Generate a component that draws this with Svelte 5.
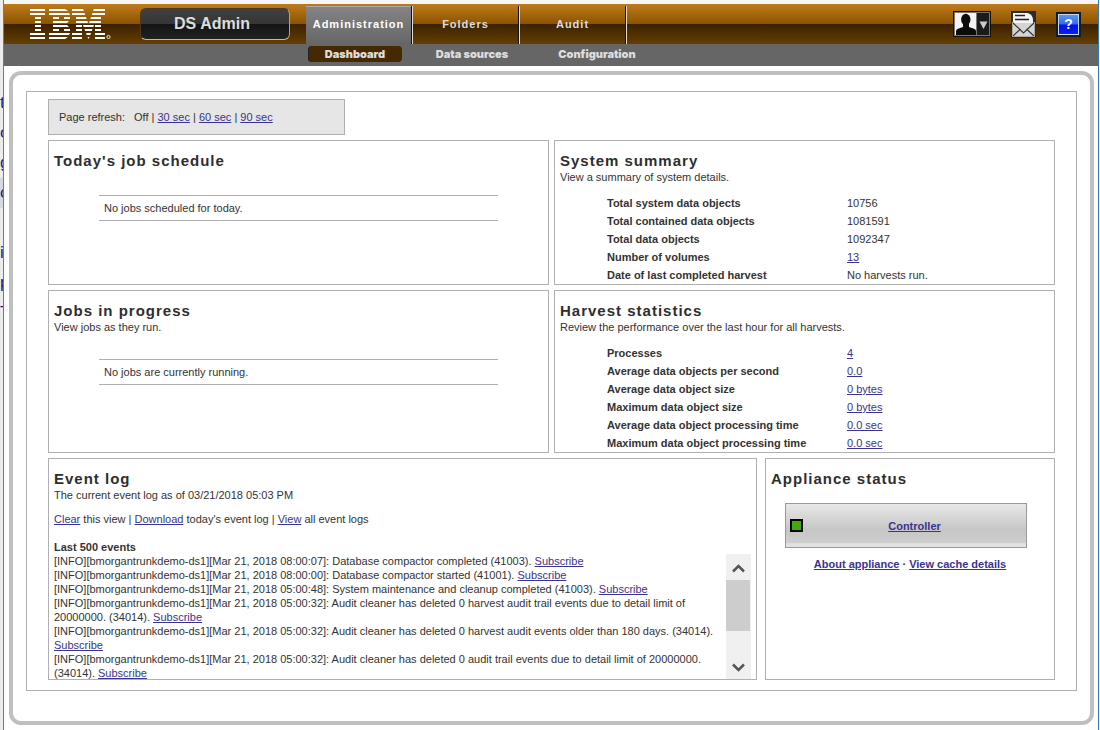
<script>
  let logBox;

  const edgeRows = ['t', 'o', 'g', 'c', '', 'i', 'p', 'T'];

  const tabs = [
    { label: 'Administration', active: true },
    { label: 'Folders', active: false },
    { label: 'Audit', active: false }
  ];

  const subTabs = [
    { label: 'Dashboard', active: true },
    { label: 'Data sources', active: false },
    { label: 'Configuration', active: false }
  ];

  const summary = [
    { label: 'Total system data objects', value: '10756' },
    { label: 'Total contained data objects', value: '1081591' },
    { label: 'Total data objects', value: '1092347' },
    { label: 'Number of volumes', value: '13', link: true },
    { label: 'Date of last completed harvest', value: 'No harvests run.' }
  ];

  const harvest = [
    { label: 'Processes', value: '4' },
    { label: 'Average data objects per second', value: '0.0' },
    { label: 'Average data object size', value: '0 bytes' },
    { label: 'Maximum data object size', value: '0 bytes' },
    { label: 'Average data object processing time', value: '0.0 sec' },
    { label: 'Maximum data object processing time', value: '0.0 sec' }
  ];

  const host = '[INFO][bmorgantrunkdemo-ds1]';
  const events = [
    { time: 'Mar 21, 2018 08:00:07', text: 'Database compactor completed (41003).' },
    { time: 'Mar 21, 2018 08:00:00', text: 'Database compactor started (41001).' },
    { time: 'Mar 21, 2018 05:00:48', text: 'System maintenance and cleanup completed (41003).' },
    { time: 'Mar 21, 2018 05:00:32', text: 'Audit cleaner has deleted 0 harvest audit trail events due to detail limit of 20000000. (34014).' },
    { time: 'Mar 21, 2018 05:00:32', text: 'Audit cleaner has deleted 0 harvest audit events older than 180 days. (34014).' },
    { time: 'Mar 21, 2018 05:00:32', text: 'Audit cleaner has deleted 0 audit trail events due to detail limit of 20000000. (34014).' }
  ];

  function scrollLog(amount) {
    logBox.scrollBy(0, amount);
  }
</script>

<div class="window">
  <div class="edge" aria-hidden="true">
    {#each edgeRows as ch}
      <span class:marked={ch === 'c'}>{ch}</span>
    {/each}
  </div>

  <div class="page">
    <header>
      <div class="bar">
        <svg class="logo" viewBox="0 0 82 30" role="img" aria-label="IBM">
          <g fill="#fff">
            <path d="M0 0h15v2H0zM0 4h15v2H0zM5 8h6v2H5zM5 12h6v2H5zM5 16h6v2H5zM5 20h6v2H5zM0 24h15v2H0zM0 28h15v2H0z" />
            <path d="M19 0h16l3 2H19zM19 4h20l1 2H19zM23 8h6v2h-6zM34 8h6v2h-6zM23 12h16l-2 2H23zM23 16h14l2 2H23zM23 20h6v2h-6zM34 20h6v2h-6zM19 24h21l-1 2H19zM19 28h19l-3 2H19z" />
            <path d="M42 0h11l1 2H42zM75 0H64l-1 2h12zM42 4h12.500l.7 2H42zM75 4H62.500l-.7 2H75zM46 8h10l.7 2H46zM71 8H61l-.7 2H71zM46 12h11.300l.7 2H46zM71 12H59.700l-.7 2H71zM46 16h6v2h-6zM53 16h11l-.7 2h-9.600zM65 16h6v2h-6zM46 20h6v2h-6zM54.500 20h8l-.7 2h-6.600zM65 20h6v2h-6zM42 24h10v2H42zM56 24h5l-.7 2h-3.600zM65 24h10v2H65zM42 28h10v2H42zM57.500 28h2l-1 2zM65 28h10v2H65z" />
          </g>
          <circle cx="78.500" cy="28" r="1.600" fill="none" stroke="#f3e6d0" stroke-width="1" />
        </svg>
        <button class="product" type="button">DS Admin</button>
        <nav class="tabs" aria-label="Main">
          {#each tabs as tab}
            <a href="#main" class:active={tab.active}>{tab.label}</a>
          {/each}
        </nav>
        <div class="tools">
          <button type="button" aria-label="User menu">
            <svg width="38" height="26" viewBox="0 0 38 26">
              <rect width="38" height="26" fill="#111" />
              <rect x="1.500" y="1.500" width="35" height="23" fill="#1b1b1b" stroke="#777" />
              <rect x="2" y="2" width="21" height="22" fill="#f4f4f4" />
              <ellipse cx="12.800" cy="8.500" rx="4.700" ry="5.800" fill="#0c0c0c" />
              <path d="M3 24v-4q0-1.500 2-2.200L10 16v-4h6v4l5 1.800q2 .7 2 2.200v4z" fill="#0c0c0c" />
              <path d="M23.500 2v22" stroke="#777" />
              <path d="M26.500 10.500h8L30.500 18z" fill="#ccc" />
            </svg>
          </button>
          <button type="button" aria-label="Messages">
            <svg width="25" height="27" viewBox="0 0 25 27">
              <rect width="25" height="27" fill="#2a2a2a" />
              <path d="M2 2h15q5 2 5 7v8H2z" fill="#f4f4f4" />
              <path d="M4 4.500h10M4 8.500h14" stroke="#222" stroke-width="1.500" />
              <path d="M1 11l4 1h15l4-1v15H1z" fill="#d4d4d4" />
              <path d="M1.500 11.500l11 10.500L23.500 11.500M1.500 25.500l8-7.500M23.500 25.500l-8-7.500" fill="none" stroke="#333" stroke-width="1.100" />
              <path d="M1.500 11v14.500h22V11" fill="none" stroke="#aaa" />
            </svg>
          </button>
          <button type="button" class="help" aria-label="Help">?</button>
        </div>
      </div>
      <nav class="sub" aria-label="Administration">
        {#each subTabs as tab}
          <a href="#main" class:active={tab.active}>{tab.label}</a>
        {/each}
      </nav>
    </header>

    <main id="main">
      <div class="sheet">
        <div class="refresh">
          <span>Page refresh:</span>
          <span>Off | <a href="#main">30 sec</a> | <a href="#main">60 sec</a> | <a href="#main">90 sec</a></span>
        </div>

        <div class="grid">
          <section class="panel">
            <h2>Today's job schedule</h2>
            <p class="empty">No jobs scheduled for today.</p>
          </section>

          <section class="panel">
            <h2>System summary</h2>
            <p>View a summary of system details.</p>
            <table>
              <tbody>
                {#each summary as row}
                  <tr>
                    <th scope="row">{row.label}</th>
                    <td>{#if row.link}<a href="#main">{row.value}</a>{:else}{row.value}{/if}</td>
                  </tr>
                {/each}
              </tbody>
            </table>
          </section>

          <section class="panel">
            <h2>Jobs in progress</h2>
            <p>View jobs as they run.</p>
            <p class="empty">No jobs are currently running.</p>
          </section>

          <section class="panel">
            <h2>Harvest statistics</h2>
            <p>Review the performance over the last hour for all harvests.</p>
            <table>
              <tbody>
                {#each harvest as row}
                  <tr>
                    <th scope="row">{row.label}</th>
                    <td><a href="#main">{row.value}</a></td>
                  </tr>
                {/each}
              </tbody>
            </table>
          </section>
        </div>

        <div class="lower">
          <section class="panel">
            <h2>Event log</h2>
            <p>The current event log as of 03/21/2018 05:03 PM</p>
            <p class="actions"><a href="#main">Clear</a> this view | <a href="#main">Download</a> today's event log | <a href="#main">View</a> all event logs</p>
            <h3>Last 500 events</h3>
            <div class="scroller">
              <div class="events" bind:this={logBox}>
                {#each events as e}
                  <div>{host}[{e.time}]: {e.text} <a href="#main">Subscribe</a></div>
                {/each}
              </div>
              <div class="track">
                <button type="button" aria-label="Scroll up" onclick={() => scrollLog(-14)}>
                  <svg width="13" height="9" viewBox="0 0 13 9"><path d="M1 7.500l5.500-5.500L12 7.500" fill="none" stroke="#555" stroke-width="2.500" /></svg>
                </button>
                <div class="thumb"></div>
                <button type="button" class="down" aria-label="Scroll down" onclick={() => scrollLog(14)}>
                  <svg width="13" height="9" viewBox="0 0 13 9"><path d="M1 1.500L6.500 7 12 1.500" fill="none" stroke="#555" stroke-width="2.500" /></svg>
                </button>
              </div>
            </div>
          </section>

          <section class="panel">
            <h2>Appliance status</h2>
            <div class="controller">
              <span class="lamp"></span>
              <a href="#main">Controller</a>
            </div>
            <p class="more"><a href="#main">About appliance</a> · <a href="#main">View cache details</a></p>
          </section>
        </div>
      </div>
    </main>
  </div>
</div>

<style>
  :global(body) {
    margin: 0;
    background: #fff;
  }

  .window {
    display: flex;
    min-height: 100vh;
    box-sizing: border-box;
    font: 11px/14px "Liberation Sans", Arial, sans-serif;
    color: #333;
    background: #f4f4f4;
  }

  .edge {
    width: 3px;
    flex: none;
    overflow: hidden;
    padding-top: 88px;
    box-sizing: border-box;
    background: #ececec;
    color: #1c1c80;
    font-size: 17px;
    line-height: 30px;
  }

  .edge span {
    display: block;
    height: 30px;
  }

  .edge .marked {
    background: #d6dae0;
  }

  .page {
    flex: 1;
    min-width: 0;
    padding-top: 4px;
    border-left: 1px solid #2b8fd0;
    border-right: 1px solid #2b7fae;
    margin-right: 1px;
    background: linear-gradient(#f6f6f6 4px, #fff 4px);
  }

  a {
    color: #3b3390;
  }

  button {
    padding: 0;
    border: 0;
    background: none;
    font-family: inherit;
    cursor: pointer;
  }

  svg {
    display: block;
  }

  .bar {
    display: flex;
    height: 40px;
    padding: 0 17px 0 26px;
    background: linear-gradient(#bf7b1d, #8c5400 49%, #3d2200 51%, #663f00);
  }

  .logo {
    width: 82px;
    height: 30px;
    margin-top: 5px;
  }

  .product {
    width: 150px;
    height: 32px;
    margin: 4px 16px 0 28px;
    padding-right: 6px;
    border: 1px solid #aaa;
    border-color: #4b3a20 #b5a48a #c4b9a6 #4b3a20;
    border-radius: 6px;
    background: linear-gradient(#404040, #363636 49%, #141414 51%, #222);
    color: #ddd;
    font-size: 16px;
    font-weight: bold;
  }

  .tabs {
    display: flex;
    margin-top: 2px;
  }

  .tabs a {
    width: 105px;
    border-right: 1px solid #111;
    box-shadow: 1px 0 #e4dccf;
    margin-right: 1px;
    color: #ddd;
    font-weight: bold;
    line-height: 36px;
    letter-spacing: 1px;
    text-align: center;
    text-decoration: none;
  }

  .tabs .active {
    background: linear-gradient(#858585, #666);
    box-shadow: 1px 0 #ddd, inset 0 1px #aaa;
    color: #fff;
  }

  .tools {
    display: flex;
    align-items: center;
    gap: 20px;
    margin-left: auto;
  }

  .help {
    width: 25px;
    height: 25px;
    border: 2px solid #101c30;
    box-shadow: inset 0 0 0 1px #c8d4e8;
    background: linear-gradient(#5a9cf2, #2f6cf0 49%, #0010e8 51%, #0a20f0);
    color: #fff;
    font-size: 14px;
    font-weight: bold;
  }

  .sub {
    display: flex;
    align-items: flex-start;
    height: 22px;
    padding: 2px 0 0 304px;
    box-sizing: border-box;
    background: #666;
  }

  .sub a {
    width: 94px;
    margin-right: 31px;
    border-radius: 4px;
    color: #ddd;
    font-family: Inter, "Liberation Sans", sans-serif;
    font-weight: 900;
    line-height: 16px;
    text-align: center;
    text-decoration: none;
    white-space: nowrap;
  }

  .sub .active {
    margin-right: 23px;
    background: #472900;
    box-shadow: inset 1px 0 #222;
  }

  main {
    margin: 5px 4px 5px 5px;
    padding: 16px 13px 30px;
    border: 4px solid #bfbfbf;
    border-radius: 12px;
  }

  .sheet {
    padding: 7px 21px 10px;
    border: 1px solid #b0b0b0;
  }

  .refresh {
    display: flex;
    gap: 9px;
    width: 275px;
    padding: 10px;
    border: 1px solid #b0b0b0;
    background: #e6e6e6;
  }

  .grid {
    display: grid;
    grid-template-columns: 1fr 1fr;
    gap: 5px;
    margin: 5px 0;
  }

  .lower {
    display: grid;
    grid-template-columns: 709fr 290fr;
    gap: 8px;
  }

  .panel {
    padding: 11px 5px 0;
    border: 1px solid #b0b0b0;
    min-width: 0;
  }

  h2 {
    margin: 0;
    color: #2e2e2e;
    font-size: 15px;
    line-height: 18px;
    letter-spacing: 1px;
  }

  h3 {
    margin: 14px 0 0;
    font-size: 11px;
  }

  p {
    margin: 0;
  }

  .panel .empty {
    margin: 25px 45px 0;
    padding: 5px;
    border: solid #b0b0b0;
    border-width: 1px 0;
  }

  table {
    margin: 10px 0 0 47px;
    border-collapse: collapse;
  }

  th,
  td {
    padding: 0;
    height: 18px;
    line-height: 18px;
    text-align: left;
  }

  th {
    width: 240px;
  }

  .actions {
    margin-top: 10px;
  }

  .scroller {
    display: flex;
    height: 125px;
  }

  .events {
    flex: 1;
    overflow: hidden;
  }

  .track {
    display: flex;
    flex-direction: column;
    width: 25px;
    background: #f0f0f0;
  }

  .track button {
    display: grid;
    place-items: center;
    height: 26px;
    padding-top: 2px;
  }

  .track .down {
    margin-top: auto;
  }

  .thumb {
    height: 51px;
    margin-right: 1px;
    background: #cdcdcd;
  }

  .controller {
    display: flex;
    align-items: center;
    height: 43px;
    margin: 15px 22px 0 14px;
    padding-left: 4px;
    border: 1px solid #999;
    background: linear-gradient(#e8e8e8, #c6c6c6 60%, #cecece 91%, #e2e2e2 92%);
    font-weight: bold;
  }

  .controller a {
    flex: 1;
    text-align: center;
  }

  .lamp {
    width: 9px;
    height: 9px;
    border: 2px solid #000;
    background: #44aa0c;
  }

  .more {
    margin-top: 9px;
    font-weight: bold;
    text-align: center;
  }
</style>
